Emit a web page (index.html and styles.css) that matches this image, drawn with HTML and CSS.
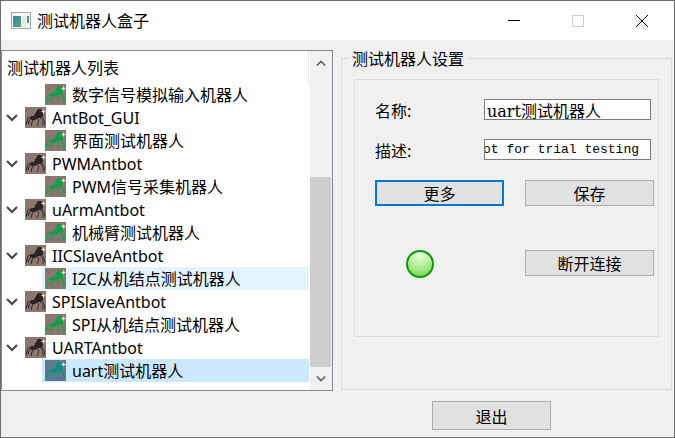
FILE: index.html
```html
<!doctype html>
<html lang="zh-CN">
  <head>
    <meta charset="UTF-8">
    <title>测试机器人盒子</title>
    <link rel="stylesheet" href="styles.css">
  </head>
  <body>
    <svg class="sprites" aria-hidden="true">
      <symbol id="ant" viewBox="0 0 21 21">
        <path d="M9 9 L11 5 L13 2 L16 2 L18 5 L18 9 L16 11 L13 11 L10 13 L7 13 L5 12 L6 9 Z" fill="currentColor"/>
        <path d="M7 10 L3 11 L1 18 M6 12 L4 14 L3 17 M9 12 L7 15 L6 19" fill="none" stroke="currentColor"/>
        <path d="M12 11 L14 14 L12 19 M15 10 L18 14 L18 19 M16 9 L19 13 L20 18" fill="none" stroke="currentColor" stroke-width="0.8"/>
        <path d="M16 4.5 H21 M18.5 2 V7" stroke="#d9a9a4" stroke-width="0.8"/>
        <circle cx="18.5" cy="4.5" r="1.2" fill="#ffe5df"/>
      </symbol>
      <symbol id="arrow" viewBox="0 0 12 8">
        <path d="M1 1 L6 6 L11 1" fill="none" stroke="currentColor" stroke-width="2"/>
      </symbol>
    </svg>
    <div class="window">
      <header class="titlebar">
        <svg class="app-icon" width="20" height="17" viewBox="0 0 20 17">
          <defs>
            <linearGradient id="pane" x1="0" y1="0" x2="1" y2="1">
              <stop offset="0" stop-color="#3f7fa8"/>
              <stop offset="1" stop-color="#4fae62"/>
            </linearGradient>
          </defs>
          <rect x="0.5" y="0.5" width="19" height="16" fill="#f4f6f7" stroke="#a3aaae"/>
          <rect x="2" y="4" width="8" height="11" fill="url(#pane)"/>
          <rect x="11" y="4" width="4" height="11" fill="#e6eaec"/>
          <rect x="16" y="4" width="2" height="7" fill="url(#pane)"/>
        </svg>
        <h1>测试机器人盒子</h1>
        <button class="win-btn" aria-label="最小化"><svg width="12" height="12"><path d="M0 5.5H12" stroke="#000"/></svg></button>
        <button class="win-btn" aria-label="最大化" disabled><svg width="12" height="12"><rect x="0.5" y="0.5" width="11" height="11" fill="none" stroke="#ccc"/></svg></button>
        <button class="win-btn" aria-label="关闭"><svg width="12" height="12"><path d="M0 0L12 12M12 0L0 12" stroke="#000"/></svg></button>
      </header>

      <main class="content">
        <section class="tree">
          <div class="tree-body">
            <h2>测试机器人列表</h2>
            <ul>
              <li class="child"><svg class="ant"><use href="#ant"/></svg>数字信号模拟输入机器人</li>
              <li><svg class="arrow"><use href="#arrow"/></svg><svg class="ant"><use href="#ant"/></svg>AntBot_GUI</li>
              <li class="child"><svg class="ant"><use href="#ant"/></svg>界面测试机器人</li>
              <li><svg class="arrow"><use href="#arrow"/></svg><svg class="ant"><use href="#ant"/></svg>PWMAntbot</li>
              <li class="child"><svg class="ant"><use href="#ant"/></svg>PWM信号采集机器人</li>
              <li><svg class="arrow"><use href="#arrow"/></svg><svg class="ant"><use href="#ant"/></svg>uArmAntbot</li>
              <li class="child"><svg class="ant"><use href="#ant"/></svg>机械臂测试机器人</li>
              <li><svg class="arrow"><use href="#arrow"/></svg><svg class="ant"><use href="#ant"/></svg>IICSlaveAntbot</li>
              <li class="child hover"><svg class="ant"><use href="#ant"/></svg>I2C从机结点测试机器人</li>
              <li><svg class="arrow"><use href="#arrow"/></svg><svg class="ant"><use href="#ant"/></svg>SPISlaveAntbot</li>
              <li class="child"><svg class="ant"><use href="#ant"/></svg>SPI从机结点测试机器人</li>
              <li><svg class="arrow"><use href="#arrow"/></svg><svg class="ant"><use href="#ant"/></svg>UARTAntbot</li>
              <li class="child selected"><svg class="ant"><use href="#ant"/></svg>uart测试机器人</li>
            </ul>
          </div>
          <div class="scrollbar">
            <button class="scroll-btn up" aria-label="向上"><svg class="arrow"><use href="#arrow"/></svg></button>
            <div class="track"><div class="thumb"></div></div>
            <button class="scroll-btn" aria-label="向下"><svg class="arrow"><use href="#arrow"/></svg></button>
          </div>
        </section>

        <fieldset class="settings">
          <legend>测试机器人设置</legend>
          <div class="panel">
            <div class="fields">
              <div class="field">
                <label for="name">名称:</label>
                <input type="text" id="name" value="uart测试机器人">
              </div>
              <div class="field">
                <label for="desc">描述:</label>
                <input type="text" id="desc" class="desc" value="bot for trial testing">
              </div>
            </div>
            <div class="actions">
              <button class="btn primary">更多</button>
              <button class="btn">保存</button>
              <span class="led" role="img" aria-label="已连接"></span>
              <button class="btn">断开连接</button>
            </div>
          </div>
        </fieldset>
      </main>

      <footer class="footer">
        <button class="btn exit">退出</button>
      </footer>
    </div>
  </body>
</html>
```
FILE: styles.css
```css
* {
  box-sizing: border-box;
}
body {
  margin: 0;
  font: 16px/20px "Noto Sans CJK SC", sans-serif;
  color: #000;
  background: #f0f0f0;
}
.sprites {
  display: none;
}
.window {
  display: flex;
  flex-direction: column;
  min-height: 100vh;
  border: 1px solid #6e6c6e;
}

/* title bar */
.titlebar {
  display: flex;
  align-items: center;
  height: 39px;
  padding-left: 10px;
  background: #fff;
}
.titlebar h1 {
  flex: 1;
  margin: 0 0 0 6px;
  font-size: 16px;
  font-weight: normal;
  line-height: 18px;
  padding-bottom: 2px;
}
.win-btn {
  display: flex;
  align-items: center;
  justify-content: center;
  width: 64px;
  height: 39px;
  padding: 0;
  border: 0;
  background: none;
}

.content {
  flex: 1;
  display: grid;
  grid-template-columns: minmax(0, 332fr) minmax(0, 331fr);
  gap: 8px;
  padding-right: 2px;
}

/* tree */
.tree {
  display: flex;
  gap: 1px;
  margin-top: 10px;
  border: 1px solid #828790;
  background: #fff;
}
.tree-body {
  flex: 1;
  padding-bottom: 8px;
}
.tree h2 {
  height: 32px;
  margin: 0;
  padding-left: 5px;
  border-right: 1px solid #e5e5e5;
  font-size: 16px;
  font-weight: normal;
  line-height: 32px;
}
.tree ul {
  margin: 0;
  padding: 0;
  list-style: none;
  font-family: "Noto Sans", "Noto Sans CJK SC", sans-serif;
}
.tree li {
  display: flex;
  align-items: center;
  height: 23px;
  padding-left: 4px;
  white-space: nowrap;
}
.tree li.child {
  margin-left: 40px;
  padding-left: 3px;
}
.tree li.hover {
  background: #e5f3ff;
}
.tree li.selected {
  background: #cce8ff;
}
.arrow {
  width: 12px;
  height: 8px;
  color: #444;
}
li .arrow {
  margin-right: 7px;
}
.ant {
  width: 21px;
  height: 21px;
  margin-right: 6px;
  background: #8b776f;
  color: #2b2325;
}
.child .ant {
  color: #12a04c;
}
.selected .ant {
  background: #627992;
  color: #0f9080;
}

/* scrollbar */
.scrollbar {
  display: flex;
  flex-direction: column;
  width: 22px;
  background: #f0f0f0;
}
.scroll-btn {
  display: flex;
  align-items: center;
  justify-content: center;
  height: 23px;
  padding: 0 1px 0 0;
  border: 0;
  background: none;
}
.scroll-btn .arrow {
  width: 10px;
  color: #606060;
}
.up .arrow {
  transform: rotate(180deg);
}
.track {
  flex: 1;
  display: flex;
  align-items: flex-end;
}
.thumb {
  width: 21px;
  height: 65%;
  background: #cdcdcd;
}

/* settings */
.settings {
  min-width: 0;
  margin: 8px 0 1px;
  padding: 11px 7px 52px;
  border: 1px solid #dcdcdc;
}
.settings legend {
  padding: 0 4px 0 3px;
}
.panel {
  height: 100%;
  margin: 0 5px;
  padding: 19px 4px 19px 20px;
  border: 1px solid #dcdcdc;
}
.fields {
  display: flex;
  flex-direction: column;
  gap: 19px;
  margin-bottom: 20px;
}
.field {
  display: flex;
  align-items: center;
  height: 21px;
  padding-right: 3px;
}
.field label {
  width: 109px;
}
.field input {
  flex: 1;
  min-width: 0;
  height: 21px;
  padding: 0 2px;
  border: 1px solid #7a7a7a;
  background: #fff;
  color: #000;
  font: 16px "DejaVu Serif", "Noto Sans CJK SC", serif;
}
/* long text stays scrolled to its end */
.field .desc {
  direction: rtl;
  padding: 0 11px 0 0;
  font: 13px "Liberation Mono", monospace;
}
.actions {
  display: grid;
  grid-template-columns: 1fr 1fr;
  gap: 44px 21px;
}
.btn {
  height: 26px;
  padding: 0;
  border: 1px solid #adadad;
  background: #e1e1e1;
  color: #000;
  font: 16px/20px "Noto Sans CJK SC", sans-serif;
}
.btn.primary {
  border: 2px solid #0078d7;
}
.led {
  width: 28px;
  height: 28px;
  margin-left: 31px;
  border: 2px solid #0c990c;
  border-radius: 50%;
  background: radial-gradient(circle at 50% 10%, #ebffe0, #a9e98a 60%, #6cd03c);
}

.footer {
  display: flex;
  justify-content: flex-end;
  padding: 10px 123px 7px 0;
}
.exit {
  width: 119px;
  height: 29px;
}
```
